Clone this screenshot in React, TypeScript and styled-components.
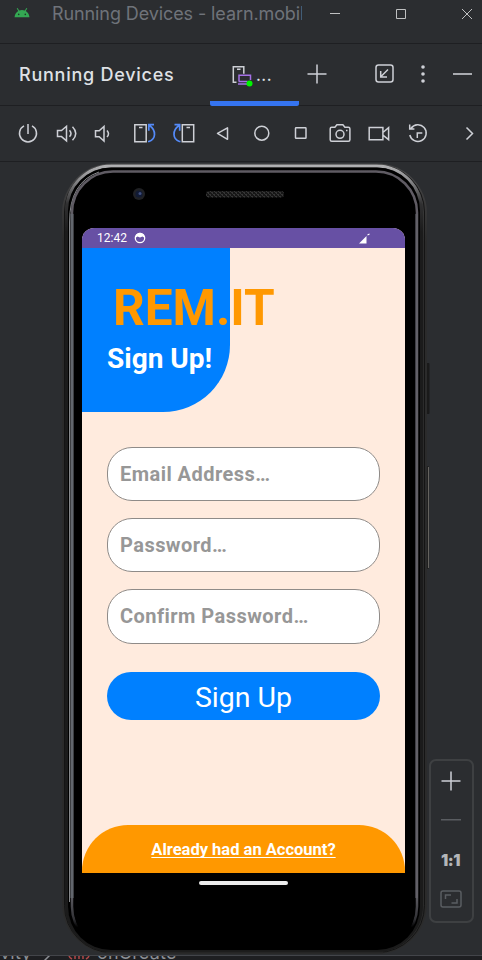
import React from 'react';
import styled, { createGlobalStyle } from 'styled-components';

const GlobalStyle = createGlobalStyle`
  * { box-sizing: border-box; }
  body { margin: 0; background: #2b2d30; }
  button { border: 0; padding: 0; background: none; font: inherit; color: inherit; }
  svg { display: block; flex: none; }
`;

const Window = styled.div`
  width: 482px;
  height: 960px;
  overflow: hidden;
  display: flex;
  flex-direction: column;
  background: #2b2d30;
  font-family: Inter, sans-serif;
`;

const TitleBar = styled.header`
  height: 44px;
  flex: none;
  display: flex;
  align-items: flex-start;
  padding-left: 14px;
  border-bottom: 1px solid #1e1f22;
`;

const AndroidMark = styled.div`
  width: 38px;
  flex: none;
  padding-top: 7px;
`;

const TitleText = styled.div`
  width: 250px;
  flex: none;
  overflow: hidden;
  white-space: nowrap;
  color: #6f737a;
  font-size: 18px;
  line-height: 28px;
  letter-spacing: -0.1px;
`;

const WindowButtons = styled.div`
  display: flex;
  flex: none;
  height: 27px;
  align-items: center;
`;

const WindowButton = styled.button`
  width: 66px;
  display: flex;
  justify-content: center;
`;

const ToolHeader = styled.div`
  height: 62px;
  flex: none;
  display: flex;
  align-items: center;
  padding-left: 19px;
  border-bottom: 1px solid #1e1f22;
`;

const ToolTitle = styled.h1`
  width: 191px;
  margin: 0;
  color: #dfe1e5;
  font-size: 18px;
  font-weight: 500;
  line-height: 24px;
  letter-spacing: 0.75px;
`;

const DeviceTab = styled.div`
  width: 89px;
  height: 62px;
  display: flex;
  align-items: center;
  margin-bottom: -1px;
  padding: 0 0 0 21px;
  gap: 2px;
  color: #dfe1e5;
  font-size: 16px;
  font-weight: 500;
  letter-spacing: 0.5px;
  border-radius: 2px;
  background: linear-gradient(#3574f0, #3574f0) bottom / 100% 5px no-repeat;
`;

const HeaderButton = styled.button<{ $width: number }>`
  width: ${(p) => p.$width}px;
  height: 61px;
  display: flex;
  align-items: center;
  justify-content: center;
  padding-bottom: 2px;
`;

const Toolbar = styled.div`
  height: 56px;
  flex: none;
  display: flex;
  padding-left: 8px;
  border-bottom: 1px solid #1e1f22;
`;

const ToolButton = styled.button<{ $wide?: boolean }>`
  width: ${(p) => (p.$wide ? 64 : 39)}px;
  height: 55px;
  display: flex;
  flex: none;
  align-items: center;
  justify-content: center;
`;

const Stage = styled.main`
  height: 793px;
  flex: none;
  display: flex;
  padding-left: 61px;
`;

const Phone = styled.section`
  position: relative;
  width: 369px;
  height: 793px;
  flex: none;
  padding: 66px 0 0 21px;
  font-family: Roboto, sans-serif;
`;

const Bezel = styled.svg`
  position: absolute;
  left: 0;
  top: 0;
`;

const Screen = styled.div`
  position: relative;
  width: 323px;
  height: 645px;
  display: flex;
  flex-direction: column;
  overflow: hidden;
  border-radius: 12px 12px 0 0;
  background: #ffebde;
`;

const StatusBar = styled.div`
  height: 20px;
  flex: none;
  display: flex;
  align-items: center;
  padding: 0 35px 0 15px;
  gap: 7px;
  background: #6750a4;
  color: #fff;
  font-size: 12px;
  line-height: 20px;
`;

const Spacer = styled.span`
  flex: 1;
`;

const Hero = styled.div`
  width: 148px;
  height: 164px;
  flex: none;
  padding: 32px 0 0 25px;
  border-bottom-right-radius: 67px;
  background: #0080ff;
  white-space: nowrap;
`;

const Brand = styled.div`
  padding-left: 6px;
  color: #ff9800;
  font-size: 49.5px;
  font-weight: 700;
  line-height: 56px;
`;

const HeroTitle = styled.div`
  margin-top: 5px;
  color: #fff;
  font-size: 28px;
  font-weight: 700;
  line-height: 36px;
`;

const Form = styled.form`
  display: flex;
  flex-direction: column;
  gap: 17px;
  padding: 35px 25px 0;
`;

const Field = styled.div`
  height: 54.2px;
  padding-left: 12px;
  border: 1px solid #8f8b88;
  border-radius: 25px;
  background: #fff;
  color: #979797;
  font-size: 20px;
  font-weight: 700;
  line-height: 52px;
  letter-spacing: 0.46px;
`;

const Submit = styled.button`
  height: 48px;
  margin-top: 11.4px;
  border-radius: 24px;
  background: #0080ff;
  color: #fff;
  font-size: 28.5px;
  line-height: 51px;
`;

const Footer = styled.div`
  height: 48px;
  margin-top: auto;
  border-radius: 46px 46px 0 0;
  background: #ff9800;
  text-align: center;
  line-height: 50px;
`;

const FooterLink = styled.a`
  color: #fff;
  font-size: 16.5px;
  font-weight: 700;
  text-decoration: underline;
  text-decoration-thickness: 1px;
  text-underline-offset: 2px;
  text-decoration-skip-ink: none;
`;

const ZoomPanel = styled.aside`
  width: 45px;
  height: 164px;
  margin: 597px 0 0 -1px;
  display: flex;
  flex-direction: column;
  align-items: center;
  justify-content: space-between;
  padding: 7px 0 9px;
  border: 2px solid #3e4042;
  border-radius: 7px;
`;

const ZoomButton = styled.button`
  width: 40px;
  height: 26px;
  display: flex;
  align-items: center;
  justify-content: center;
  padding-right: 2px;
  color: #b4b6b9;
  font-size: 16px;
  font-weight: 900;
  letter-spacing: -0.5px;
`;

const Breadcrumbs = styled.footer`
  height: 5px;
  flex: none;
  display: flex;
  align-items: flex-end;
  overflow: hidden;
  border-top: 1px solid #43454a;
  background: #1e1f22;
  color: #8c8f94;
  font-size: 18px;
  line-height: 18px;
  letter-spacing: 0.2px;
`;

const Crumb = styled.span<{ $width: number }>`
  width: ${(p) => p.$width}px;
  height: 14px;
  line-height: 14px;
  white-space: nowrap;
`;

const Icon = ({ children }: { children: React.ReactNode }) => (
  <svg width="25" height="25" viewBox="0 0 25 25" fill="none" stroke="#ced0d6" strokeWidth="1.5">
    {children}
  </svg>
);

const toolIcons: React.ReactNode[] = [
  <path d="M9 4.900A8.500 8.500 0 1 0 17 4.900M13 3v10" />,
  <path d="M3.500 10.200h4L12.500 6v14.500l-5-4.200h-4zM15.500 10q3 3.300 0 6.500M18.500 6.500q6.500 6.700 0 13.500" transform="translate(0 -.7)" />,
  <path d="M2.500 9.700h3.700L11 5.500V20l-4.800-4.200H2.500zM14 9.500q3 3.300 0 6.500" />,
  <>
    <path d="M2.800 3.800h11.400v16.900H2.800zM7 6.500h3.500" />
    <path stroke="#548af7" strokeWidth="1.700" d="M16 20.500h1C24 18 24.500 9.500 17.500 4.500M22 3.700h-5.200v6" />
  </>,
  <>
    <path d="M11.300 3.800h11.400v16.900H11.300zM15.500 6.500h3.500" />
    <path stroke="#548af7" strokeWidth="1.700" d="M9.500 20.500h-1C1.500 18 1 9.500 8 4.500M3.500 3.700h5.200v6" />
  </>,
  <path d="M7.500 12.300l10-5.500v11.500z" strokeLinejoin="round" />,
  <circle cx="12.800" cy="12.200" r="7" />,
  <rect x="7.500" y="6.800" width="10.500" height="10.500" rx=".6" />,
  <>
    <path d="M3.200 7.700q0-1.500 1.500-1.500h3.200l2-2.400h6l2 2.400h3.400q1.600 0 1.600 1.500v11q0 1.500-1.500 1.500H4.700q-1.500 0-1.500-1.500z" />
    <circle cx="13" cy="13.300" r="4" />
    <path d="M19 9.500h1.500" />
  </>,
  <path d="M3.200 6.500h13.700v12.200H3.200zM16.900 11.500l5.700-4.800v12l-5.700-4.500" />,
  <>
    <path d="M6 7.500A8.300 8.300 0 1 1 4.800 14M4.700 3.500V8h4.700" />
    <path d="M12.300 17v-5h5" />
  </>,
];

const PhoneBezel = () => (
  <Bezel width="369" height="793" viewBox="0 0 369 793" fill="none">
    <defs>
      <linearGradient id="shell" x1="0" y1="0" x2="0" y2="793" gradientUnits="userSpaceOnUse">
        <stop offset="0" stopColor="#4a4a4b" />
        <stop offset=".1" stopColor="#2b2b2b" />
        <stop offset="1" stopColor="#2b2b2b" />
      </linearGradient>
      <linearGradient id="shine" x1="0" y1="0" x2="0" y2="70" gradientUnits="userSpaceOnUse">
        <stop offset="0" stopColor="#b9b9bb" />
        <stop offset=".25" stopColor="#8c8c8e" />
        <stop offset=".6" stopColor="#303031" />
        <stop offset="1" stopColor="#1b1b1b" />
      </linearGradient>
      <linearGradient id="rim" x1="0" y1="0" x2="0" y2="793" gradientUnits="userSpaceOnUse">
        <stop offset="0" stopColor="#5f5b63" />
        <stop offset=".92" stopColor="#65646b" />
        <stop offset=".955" stopColor="#303034" />
        <stop offset=".965" stopColor="#000" />
      </linearGradient>
      <pattern id="mesh" width="4" height="4" patternUnits="userSpaceOnUse">
        <path fill="#353535" d="M0 0h2v1H0zM2 2h2v1H2zM1 1h1v1H1zM3 3h1v1H3z" />
      </pattern>
    </defs>
    <rect x="364" y="201" width="4.500" height="51" rx="1" fill="#1a1a1a" />
    <rect x="365" y="304" width="3" height="103" rx="1" fill="#202020" />
    <path d="M367.500 305v101" stroke="#65635f" />
    <rect x="1" y="1.500" width="365" height="790.500" rx="50" fill="url(#shell)" />
    <rect x="3.500" y="3" width="360" height="787.500" rx="47" stroke="#141414" />
    <rect x="5.500" y="4" width="355" height="784.500" rx="45" stroke="url(#shine)" strokeWidth="3" />
    <rect x="7" y="5.500" width="352" height="782.500" rx="43" fill="#000" />
    <path d="M8.500 740V60Q8.500 20 38 10" stroke="#85878a" />
    <rect x="11" y="9.500" width="345" height="776" rx="41" stroke="url(#rim)" strokeWidth="2.500" />
    <path d="M11 736V52" stroke="#62666d" strokeWidth="3" />
    <path d="M355.700 736V52" stroke="#626068" strokeWidth="2.500" />
    <rect x="13" y="11.500" width="341" height="774.500" rx="39" fill="#000" />
    <path d="M45 790.500h277" stroke="#252525" strokeWidth="1.500" />
    <circle cx="78" cy="32" r="6" fill="#202124" />
    <circle cx="78" cy="32" r="3.600" fill="#111a33" />
    <circle cx="79" cy="31.500" r="1.500" fill="#3f4e7e" />
    <rect x="145" y="29" width="78" height="6.500" rx="3" fill="#171717" />
    <rect x="145" y="29" width="78" height="6.500" rx="3" fill="url(#mesh)" />
    <rect x="138" y="719" width="89" height="4" rx="2" fill="#ececec" />
  </Bezel>
);

export default function App() {
  return (
    <Window>
      <GlobalStyle />
      <TitleBar>
        <AndroidMark>
          <svg width="16" height="11" viewBox="0 0 16 11">
            <path fill="#34a853" d="M.5 10.200C.9 7 2.500 5 4.300 4.100L2.700 1.600l.9-.5 1.600 2.500Q8 2.500 10.800 3.600l1.600-2.500.9.5-1.600 2.500c1.800.9 3.400 2.900 3.800 6.100z" />
            <circle cx="4.700" cy="7.400" r=".8" fill="#1e3a28" />
            <circle cx="11.300" cy="7.400" r=".8" fill="#1e3a28" />
          </svg>
        </AndroidMark>
        <TitleText>Running Devices - learn.mobil</TitleText>
        <WindowButtons>
          <WindowButton aria-label="Minimize">
            <svg width="12" height="12" stroke="#bfc0c1"><path d="M1 5.500h10" /></svg>
          </WindowButton>
          <WindowButton aria-label="Maximize">
            <svg width="12" height="12" fill="none" stroke="#bfc0c1"><path d="M1.500 1.500h9v9h-9z" /></svg>
          </WindowButton>
          <WindowButton aria-label="Close">
            <svg width="12" height="12" stroke="#bfc0c1"><path d="M1 1l10 10M11 1L1 11" /></svg>
          </WindowButton>
        </WindowButtons>
      </TitleBar>

      <ToolHeader>
        <ToolTitle>Running Devices</ToolTitle>
        <DeviceTab>
          <svg width="23" height="23" viewBox="0 0 23 23" fill="none" strokeWidth="1.500">
            <path stroke="#ced0d6" d="M5.500 18.300H2.300V2.800h10.500v7M6 5.300h3.500" />
            <path stroke="#a571e6" d="M8 17v-5.700h11.500V16M7.500 17.500h9M7 20h9" />
            <circle cx="18.500" cy="19.500" r="3" fill="#00f500" />
          </svg>
          ...
        </DeviceTab>
        <HeaderButton $width={36} aria-label="Add device">
          <svg width="20" height="20" stroke="#ced0d6" strokeWidth="1.500"><path d="M10 .5v19M.5 10h19" /></svg>
        </HeaderButton>
        <Spacer />
        <HeaderButton $width={39} aria-label="Dock">
          <svg width="19" height="19" fill="none" stroke="#ced0d6" strokeWidth="1.500">
            <rect x="1" y="1" width="17" height="17" rx="2.500" />
            <path d="M13 5.500l-7 7M5.700 7v6H12" />
          </svg>
        </HeaderButton>
        <HeaderButton $width={38} aria-label="Options">
          <svg width="4" height="18" fill="#ced0d6">
            <circle cx="2" cy="2" r="1.800" /><circle cx="2" cy="9" r="1.800" /><circle cx="2" cy="16" r="1.800" />
          </svg>
        </HeaderButton>
        <HeaderButton $width={40} aria-label="Hide">
          <svg width="19" height="2" fill="#a9abb0"><path d="M0 0h19v2H0z" /></svg>
        </HeaderButton>
      </ToolHeader>

      <Toolbar>
        {toolIcons.map((icon, i) => (
          <ToolButton key={i}><Icon>{icon}</Icon></ToolButton>
        ))}
        <ToolButton $wide aria-label="More"><Icon><path d="M9.500 6.500l6 6-6 6" /></Icon></ToolButton>
      </Toolbar>

      <Stage>
        <Phone>
          <PhoneBezel />
          <Screen>
            <StatusBar>
              <span>12:42</span>
              <svg width="12" height="12" fill="none" stroke="#fff">
                <circle cx="6" cy="6" r="4.700" strokeWidth="1.300" />
                <path fill="#fff" stroke="none" d="M2 3Q6-1.500 10 3v2.500L8.500 4.500 6 5.500l-2.500-1L2 5.500z" />
              </svg>
              <Spacer />
              <svg width="11" height="11" fill="#fff"><path d="M0 10.500L7.500 3v7.500zM8.500 2.500V1.300L10.500.5v1.200z" /></svg>
            </StatusBar>
            <Hero>
              <Brand>REM.IT</Brand>
              <HeroTitle>Sign Up!</HeroTitle>
            </Hero>
            <Form>
              <Field>Email Address…</Field>
              <Field>Password…</Field>
              <Field>Confirm Password…</Field>
              <Submit type="button">Sign Up</Submit>
            </Form>
            <Footer><FooterLink>Already had an Account?</FooterLink></Footer>
          </Screen>
        </Phone>
        <ZoomPanel>
          <ZoomButton aria-label="Zoom in">
            <svg width="20" height="20" stroke="#ced0d6" strokeWidth="1.500"><path d="M10 .5v19M.5 10h19" /></svg>
          </ZoomButton>
          <ZoomButton aria-label="Zoom out">
            <svg width="20" height="2" fill="#5a5d61"><path d="M0 0h20v1.500H0z" /></svg>
          </ZoomButton>
          <ZoomButton>1:1</ZoomButton>
          <ZoomButton aria-label="Fit to screen">
            <svg width="22" height="18" fill="none" stroke="#5a5d61" strokeWidth="1.500">
              <rect x="1" y="1" width="20" height="16" rx="2" />
              <path d="M5.500 9V5H11M11.500 13H17V9" />
            </svg>
          </ZoomButton>
        </ZoomPanel>
      </Stage>

      <Breadcrumbs>
        <Crumb $width={42}>vity</Crumb>
        <Crumb $width={26}>
          <svg width="10" height="14" fill="none" stroke="#8c8f94" strokeWidth="1.500"><path d="M2 3l6 6-6 6" /></svg>
        </Crumb>
        <Crumb $width={29}>
          <svg width="22" height="14" fill="none" stroke="#b04848" strokeWidth="1.500">
            <path d="M4 4q-6 6 0 9M18 4q6 6 0 9M7 13v-3q2-2 4 0v3M11 10q2-2 4 0v3" />
          </svg>
        </Crumb>
        <Crumb $width={90}>onCreate</Crumb>
      </Breadcrumbs>
    </Window>
  );
}
